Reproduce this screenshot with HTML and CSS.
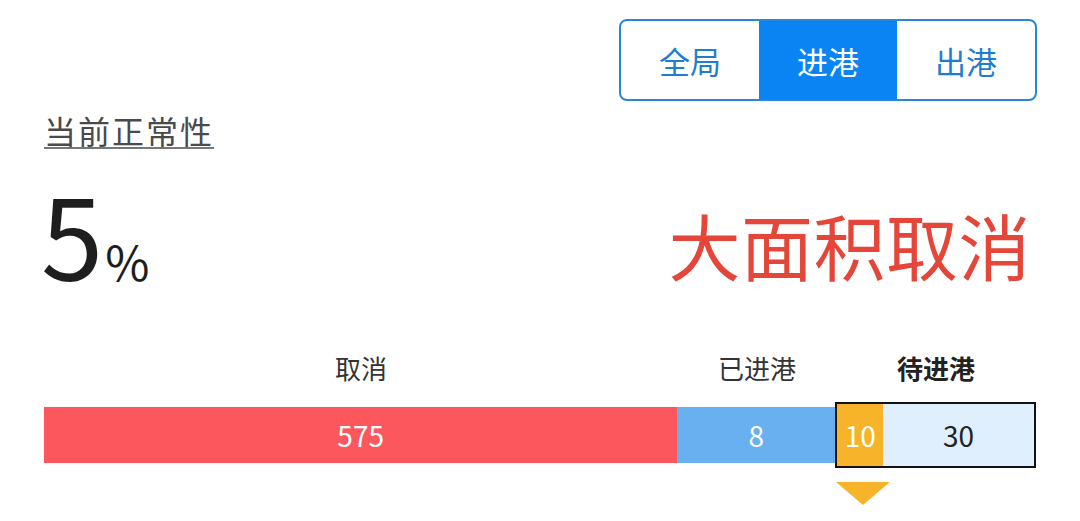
FILE: index.html
```html
<!DOCTYPE html>
<html lang="zh">
<head>
<meta charset="utf-8">
<link rel="stylesheet" href="styles.css">
</head>
<body>
<div class="page">
  <div class="top">
    <div class="seg">
      <div class="seg-item">全局</div>
      <div class="seg-item active">进港</div>
      <div class="seg-item">出港</div>
    </div>
  </div>
  <div class="title">当前正常性</div>
  <div class="stat-row">
    <div class="pct"><span class="num">5</span><span class="unit">%</span></div>
    <div class="status">大面积取消</div>
  </div>
  <div class="labels">
    <div class="lab l-cancel">取消</div>
    <div class="lab l-in">已进港</div>
    <div class="lab l-wait">待进港</div>
  </div>
  <div class="bar">
    <div class="seg-cancel">575</div>
    <div class="seg-in">8</div>
    <div class="wait-box">
      <div class="seg-orange">10</div>
      <div class="seg-light">30</div>
      <div class="tri"></div>
    </div>
  </div>
</div>
</body>
</html>
```
FILE: styles.css
```css
* { box-sizing: border-box; }
html, body { margin: 0; padding: 0; background: #fff; }
body {
  font-family: "Noto Sans CJK SC", "Noto Sans", sans-serif;
  width: 1080px;
  height: 521px;
  overflow: hidden;
}
.page {
  padding: 19px 44px 0 44px;
}
.top {
  display: flex;
  justify-content: flex-end;
  margin-right: -1px;
}
.seg {
  display: flex;
  height: 82px;
  border: 2px solid #2a86d8;
  border-radius: 8px;
  overflow: hidden;
}
.seg-item {
  width: 138px;
  display: flex;
  align-items: center;
  justify-content: center;
  font-size: 31px;
  color: #1f7dd0;
  line-height: 1;
}
.seg-item.active {
  background: #0a84f2;
  color: #fff;
}
.title {
  margin-top: 9px;
  font-size: 32px;
  line-height: 40px;
  color: #4a4a4a;
  text-decoration: underline;
  text-decoration-color: #777;
  text-decoration-thickness: 2px;
  text-underline-offset: 3px;
  letter-spacing: 2px;
  width: max-content;
}
.stat-row {
  display: flex;
  justify-content: space-between;
  align-items: flex-end;
  margin-top: 25px;
  height: 120px;
}
.pct {
  color: #1e1e1e;
  display: flex;
  align-items: baseline;
  margin-left: -3px;
}
.num {
  font-size: 112px;
  line-height: 120px;
  font-weight: 400;
}
.unit {
  font-size: 48px;
  margin-left: 2px;
}
.status {
  font-size: 72px;
  line-height: 100px;
  color: #e4463a;
  margin-bottom: 1px;
  margin-right: 5px;
  letter-spacing: 0.5px;
}
.labels {
  display: flex;
  margin-top: 52px;
  height: 40px;
  align-items: center;
}
.lab {
  text-align: center;
  font-size: 26px;
  color: #333;
}
.l-cancel { width: 634px; }
.l-in { width: 158px; }
.l-wait { width: 200px; font-weight: 700; color: #222; }
.bar {
  display: flex;
  margin-top: 20px;
  height: 56px;
  align-items: center;
}
.seg-cancel, .seg-in {
  height: 56px;
  display: flex;
  align-items: center;
  justify-content: center;
  color: #fff;
  font-size: 28px;
}
.seg-cancel { width: 634px; background: #fc575c; }
.seg-in { width: 158px; background: #68b0f0; }
.wait-box {
  position: relative;
  width: 201px;
  height: 66px;
  border: 2px solid #111;
  display: flex;
}
.seg-orange {
  width: 46px;
  background: #f7b42a;
  color: #fff;
  font-size: 28px;
  display: flex;
  align-items: center;
  justify-content: center;
}
.seg-light {
  flex: 1;
  background: #dfeffd;
  color: #222;
  font-size: 28px;
  display: flex;
  align-items: center;
  justify-content: center;
}
.tri {
  position: absolute;
  left: -1px;
  top: 78px;
  width: 0;
  height: 0;
  border-left: 27px solid transparent;
  border-right: 27px solid transparent;
  border-top: 23px solid #f7b42a;
}
```
